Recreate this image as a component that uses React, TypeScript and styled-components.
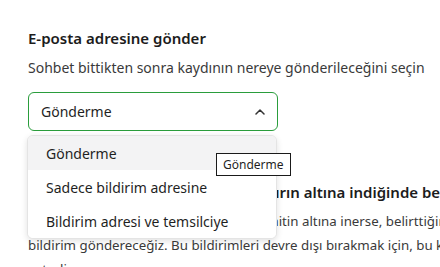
import * as React from 'react';
import styled, { createGlobalStyle } from 'styled-components';

const GlobalStyle = createGlobalStyle`
  html, body {
    margin: 0;
    padding: 0;
    background: #ffffff;
    overflow: hidden;
  }
  body {
    font-family: "Noto Sans", "Open Sans", sans-serif;
    color: #1f1f1f;
  }
`;

const Page = styled.div`
  position: relative;
  width: 620px;
  padding: 26px 0 0 28px;
`;

const Section = styled.section`
  display: flex;
  flex-direction: column;
`;

const Heading = styled.h3`
  margin: 0;
  font-size: 15px;
  line-height: 24px;
  font-weight: 600;
  color: #1c1c1c;
  white-space: nowrap;
`;

const Hint = styled.p`
  margin: 8px 0 0;
  font-size: 14px;
  line-height: 20px;
  color: #3a3a3a;
  white-space: nowrap;
`;

const SelectWrap = styled.div`
  position: relative;
  width: 250px;
  margin-top: 14px;
`;

const SelectBox = styled.button`
  box-sizing: border-box;
  display: flex;
  align-items: center;
  justify-content: space-between;
  width: 100%;
  height: 39px;
  padding: 0 12px;
  border: 1px solid #2a9d3c;
  border-radius: 6px;
  background: #fff;
  font: inherit;
  font-size: 14px;
  color: #1f1f1f;
  cursor: pointer;
`;

const Menu = styled.ul`
  position: absolute;
  z-index: 2;
  top: 43px;
  left: -1px;
  width: 250px;
  box-sizing: border-box;
  margin: 0;
  padding: 0;
  list-style: none;
  background: #fff;
  border: 1px solid #e4e4e4;
  border-radius: 6px;
  box-shadow: 0 2px 6px rgba(0, 0, 0, 0.12);
  overflow: hidden;
`;

const Option = styled.li<{ $active?: boolean }>`
  height: 34px;
  display: flex;
  align-items: center;
  padding: 0 18px;
  font-size: 14px;
  color: #1f1f1f;
  background: ${p => (p.$active ? '#f3f3f4' : '#fff')};
`;

const Tooltip = styled.div`
  position: absolute;
  z-index: 3;
  top: 153px;
  left: 216px;
  box-sizing: border-box;
  height: 23px;
  padding: 0 6px;
  display: flex;
  align-items: center;
  background: #fff;
  border: 1px solid #1a1a1a;
  font-size: 12px;
  color: #1f1f1f;
  white-space: nowrap;
`;

const Lower = styled(Section)`
  margin-top: 49px;
`;

const Body = styled.p`
  margin: 5px 0 0;
  font-size: 13.3px;
  line-height: 24px;
  color: #3a3a3a;
  white-space: nowrap;
`;

const Chevron = () => (
  <svg width="10" height="6" viewBox="0 0 10 6" fill="none">
    <polyline points="1,5 5,1 9,5" stroke="#333" strokeWidth="1.5" strokeLinecap="round" strokeLinejoin="round" />
  </svg>
);

const options = ['Gönderme', 'Sadece bildirim adresine', 'Bildirim adresi ve temsilciye'];

export default function App() {
  const [value] = React.useState(options[0]);
  return (
    <Page>
      <GlobalStyle />
      <Section>
        <Heading>E-posta adresine gönder</Heading>
        <Hint>Sohbet bittikten sonra kaydının nereye gönderileceğini seçin</Hint>
        <SelectWrap>
          <SelectBox type="button">
            <span>{value}</span>
            <Chevron />
          </SelectBox>
          <Menu>
            {options.map(o => (
              <Option key={o} $active={o === value}>{o}</Option>
            ))}
          </Menu>
        </SelectWrap>
      </Section>
      <Lower>
        <Heading>Dakika bakiyeniz belirlediğiniz sınırın altına indiğinde beni bilgilendir</Heading>
        <Body>
          Kalan dakika bakiyeniz, belirlediğiniz limitin altına inerse, belirttiğiniz adreslere
          <br />
          bildirim göndereceğiz. Bu bildirimleri devre dışı bırakmak için, bu kısmı boş bırakmanız
          <br />
          yeterli.
        </Body>
      </Lower>
      <Tooltip>Gönderme</Tooltip>
    </Page>
  );
}
